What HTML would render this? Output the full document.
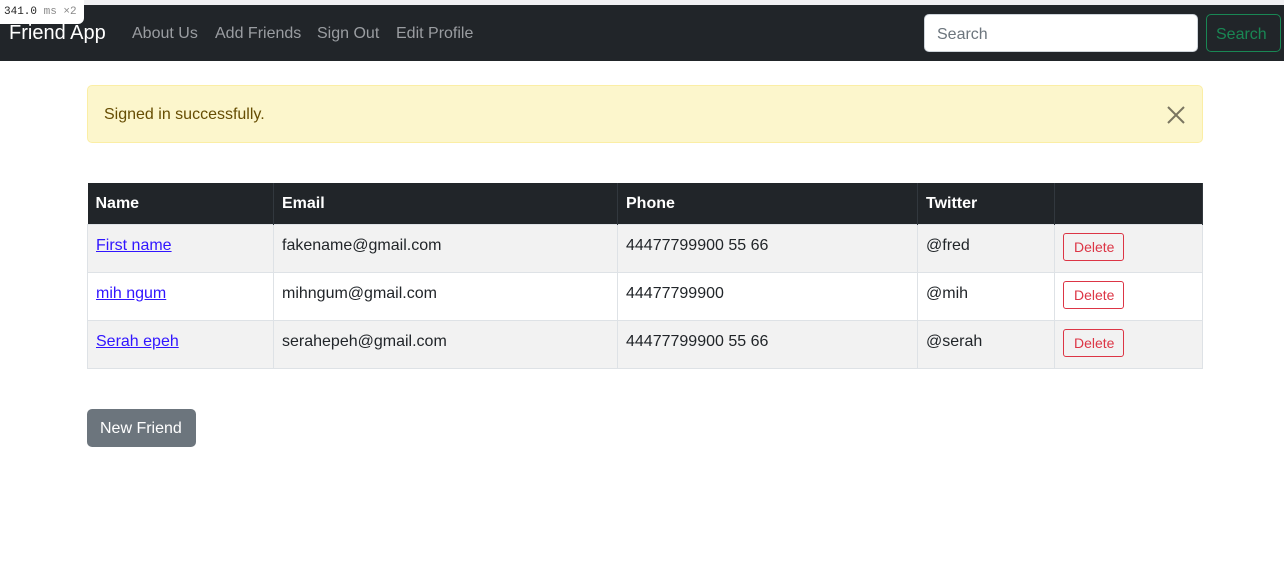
<!DOCTYPE html>
<html><head><style>
*{box-sizing:border-box;margin:0;padding:0}
body{width:1284px;height:583px;background:#fff;font-family:"Liberation Sans",sans-serif;font-size:16px;color:#212529;position:relative;overflow:hidden}
.top{position:absolute;top:0;left:0;width:1284px;height:5px;background:#f0f0f2}
nav{position:absolute;top:5px;left:0;width:1284px;height:56px;background:#212529}
.brand{position:absolute;left:9px;top:17px;color:#fff;font-size:20px}
.link{position:absolute;top:20px;color:#9a9da1;font-size:16px}
.badge{position:absolute;left:0;top:0;width:84px;height:24px;background:#fff;border-radius:0 0 6px 0;font-family:"Liberation Mono",monospace;font-size:11px;padding:6px 0 0 4px;color:#222;z-index:2}
.badge span{color:#888}
.sin{position:absolute;left:924px;top:9px;width:274px;height:38px;background:#fff;border:1px solid #ced4da;border-radius:5px;color:#6c757d;padding:11px 12px 0}
.sbtn{position:absolute;left:1206px;top:9px;width:75px;height:38px;border:1px solid #198754;border-radius:5px;color:#198754;padding:11px 0 0 9px}
.alert{position:absolute;left:87px;top:85px;width:1116px;height:58px;background:#fcf6cc;border:1px solid #fbeea5;border-radius:5px;color:#664d03;padding:20px 16px}
.x{position:absolute;right:16px;top:19px}
table{position:absolute;left:87px;top:183px;width:1116px;border-collapse:collapse}
th{background:#212529;color:#fff;text-align:left;font-weight:bold;height:41px;padding:2px 8px 0;border-right:1px solid #32383e}
td{height:48px;padding:0 8px;border:1px solid #dee2e6;vertical-align:top;padding-top:12px}
tr.o td{background:#f2f2f2}
a{color:#3015ff;text-decoration:underline}
.del{display:inline-block;border:1px solid #dc3545;color:#dc3545;border-radius:3px;font-size:14px;padding:5px 9px 5px 10px;margin-top:-4px}
.nf{position:absolute;left:87px;top:409px;width:109px;height:38px;background:#6c757d;color:#fff;border-radius:5px;padding:11px 13px 0}
</style></head><body>
<div class="top"></div>
<div class="badge">341.0<span> ms ×2</span></div>
<nav>
<div class="brand">Friend App</div>
<div class="link" style="left:132px">About Us</div>
<div class="link" style="left:215px">Add Friends</div>
<div class="link" style="left:317px">Sign Out</div>
<div class="link" style="left:396px">Edit Profile</div>
<div class="sin">Search</div>
<div class="sbtn">Search</div>
</nav>
<div class="alert">Signed in successfully.
<svg class="x" width="20" height="20" viewBox="0 0 20 20"><path d="M2 2L18 18M18 2L2 18" stroke="#7a7560" stroke-width="2"/></svg></div>
<table>
<tr><th style="width:186px">Name</th><th style="width:344px">Email</th><th style="width:300px">Phone</th><th style="width:137px">Twitter</th><th></th></tr>
<tr class="o"><td><a>First name</a></td><td>fakename@gmail.com</td><td>44477799900 55 66</td><td>@fred</td><td><span class="del">Delete</span></td></tr>
<tr><td><a>mih ngum</a></td><td>mihngum@gmail.com</td><td>44477799900</td><td>@mih</td><td><span class="del">Delete</span></td></tr>
<tr class="o"><td><a>Serah epeh</a></td><td>serahepeh@gmail.com</td><td>44477799900 55 66</td><td>@serah</td><td><span class="del">Delete</span></td></tr>
</table>
<div class="nf">New Friend</div>
</body></html>
